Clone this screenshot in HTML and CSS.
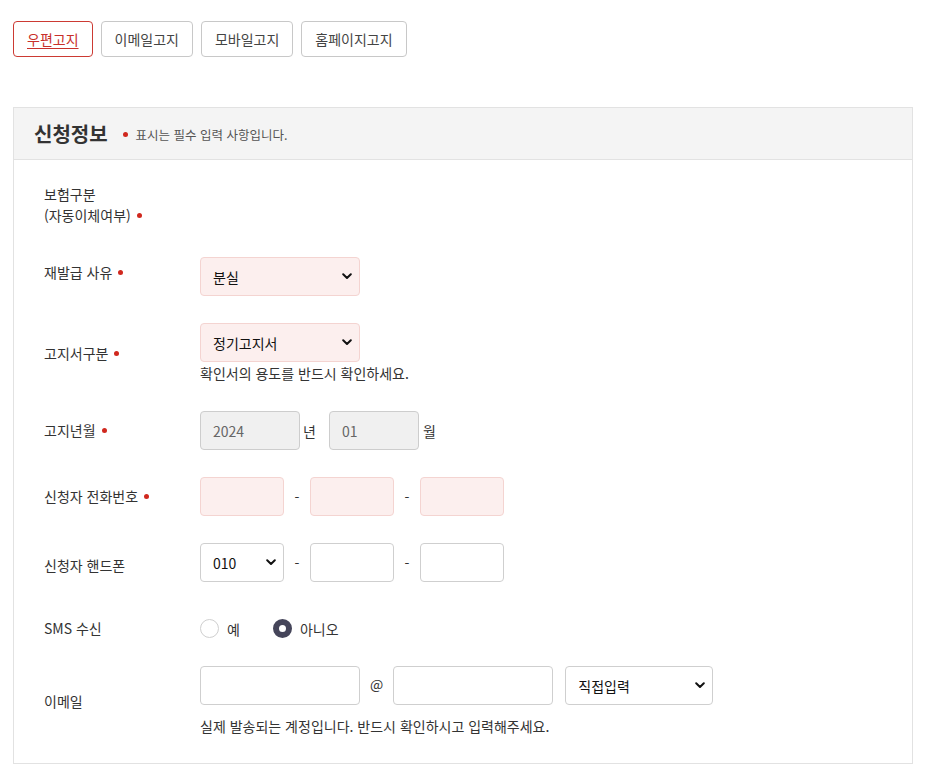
FILE: index.html
```html
<!DOCTYPE html>
<html lang="ko">
<head>
<meta charset="utf-8">
<title>신청정보</title>
<link rel="stylesheet" href="styles.css">
</head>
<body>
<div class="page">
  <nav class="tabs">
    <a class="tab tab-active" href="#">우편고지</a>
    <a class="tab" href="#">이메일고지</a>
    <a class="tab" href="#">모바일고지</a>
    <a class="tab" href="#">홈페이지고지</a>
  </nav>

  <section class="panel">
    <header class="panel-head">
      <h2 class="panel-title">신청정보</h2>
      <p class="panel-note"><span class="req"></span>표시는 필수 입력 사항입니다.</p>
    </header>

    <div class="form">
      <div class="label label-multi">보험구분<br>(자동이체여부)<span class="req"></span></div>
      <div class="control control-empty"></div>

      <div class="label label-shift-up">재발급 사유<span class="req"></span></div>
      <div class="control">
        <span class="select-wrap">
          <select class="field field-req w160"><option>분실</option></select>
          <svg class="chev" width="10" height="7" viewBox="0 0 10 7"><path d="M1.2 1.3 L5 5 L8.8 1.3" fill="none" stroke="#111" stroke-width="2" stroke-linecap="round" stroke-linejoin="round"/></svg>
        </span>
      </div>

      <div class="label">고지서구분<span class="req"></span></div>
      <div class="control control-col">
        <span class="select-wrap">
          <select class="field field-req w160"><option>정기고지서</option></select>
          <svg class="chev" width="10" height="7" viewBox="0 0 10 7"><path d="M1.2 1.3 L5 5 L8.8 1.3" fill="none" stroke="#111" stroke-width="2" stroke-linecap="round" stroke-linejoin="round"/></svg>
        </span>
        <p class="help">확인서의 용도를 반드시 확인하세요.</p>
      </div>

      <div class="label">고지년월<span class="req"></span></div>
      <div class="control">
        <input class="field field-ro w100" type="text" value="2024" readonly>
        <span class="unit unit-year">년</span>
        <input class="field field-ro w90" type="text" value="01" readonly>
        <span class="unit unit-month">월</span>
      </div>

      <div class="label">신청자 전화번호<span class="req"></span></div>
      <div class="control">
        <input class="field field-req w84" type="text">
        <span class="dash">-</span>
        <input class="field field-req w84" type="text">
        <span class="dash">-</span>
        <input class="field field-req w84" type="text">
      </div>

      <div class="label label-shift-down">신청자 핸드폰</div>
      <div class="control">
        <span class="select-wrap">
          <select class="field w84"><option>010</option></select>
          <svg class="chev" width="10" height="7" viewBox="0 0 10 7"><path d="M1.2 1.3 L5 5 L8.8 1.3" fill="none" stroke="#111" stroke-width="2" stroke-linecap="round" stroke-linejoin="round"/></svg>
        </span>
        <span class="dash">-</span>
        <input class="field w84" type="text">
        <span class="dash">-</span>
        <input class="field w84" type="text">
      </div>

      <div class="label label-end">SMS 수신</div>
      <div class="control control-radio">
        <label class="radio"><span class="radio-dot"></span>예</label>
        <label class="radio"><span class="radio-dot radio-on"></span>아니오</label>
      </div>

      <div class="label">이메일</div>
      <div class="control control-col">
        <div class="email-row">
          <input class="field w160" type="text">
          <span class="at">@</span>
          <input class="field w160" type="text">
          <span class="select-wrap email-select">
            <select class="field w148"><option>직접입력</option></select>
            <svg class="chev" width="10" height="7" viewBox="0 0 10 7"><path d="M1.2 1.3 L5 5 L8.8 1.3" fill="none" stroke="#111" stroke-width="2" stroke-linecap="round" stroke-linejoin="round"/></svg>
          </span>
        </div>
        <p class="help help-gap">실제 발송되는 계정입니다. 반드시 확인하시고 입력해주세요.</p>
      </div>
    </div>
  </section>
</div>
</body>
</html>
```

FILE: styles.css
```css
* { box-sizing: border-box; }

html, body {
  margin: 0;
  padding: 0;
  background: #fff;
}

body {
  font-family: "Noto Sans CJK KR", "Noto Sans", sans-serif;
  font-size: 14px;
  color: #333;
}

.page {
  padding: 21px 12px 0 13px;
}

.tabs {
  display: flex;
  gap: 8px;
}

.tab {
  display: flex;
  align-items: center;
  height: 36px;
  padding: 0 13px;
  border: 1px solid #c8c8c8;
  border-radius: 4px;
  color: #444;
  text-decoration: none;
  font-size: 14px;
  line-height: 20px;
}

.tab-active {
  border-color: #cc3a33;
  color: #c8302a;
  text-decoration: underline;
  text-underline-offset: 3px;
}

.panel {
  margin-top: 50px;
  border: 1px solid #e2e2e2;
}

.panel-head {
  display: flex;
  align-items: center;
  height: 52px;
  padding: 0 20px;
  background: #f4f4f4;
  border-bottom: 1px solid #e2e2e2;
}

.panel-title {
  margin: 0;
  font-size: 20px;
  font-weight: 700;
  color: #333;
  line-height: 28px;
}

.panel-note {
  display: flex;
  align-items: center;
  margin: 2px 0 0 15px;
  font-size: 12.5px;
  color: #555;
}

.panel-note .req {
  margin: 0 8px 0 0;
}

.req {
  display: inline-block;
  width: 5px;
  height: 5px;
  border-radius: 50%;
  background: #d0281e;
  margin-left: 6px;
  vertical-align: 3px;
}

.form {
  display: grid;
  grid-template-columns: 156px 1fr;
  row-gap: 27px;
  padding: 24px 30px 26px 30px;
}

.label {
  align-self: center;
  line-height: 21px;
  color: #333;
}

.label-multi {
  margin-bottom: 4px;
}

.label-shift-up {
  position: relative;
  top: -4px;
}

.label-shift-down {
  position: relative;
  top: 3px;
}

.label-end {
  align-self: end;
}

.control {
  display: flex;
  align-items: center;
}

.control-col {
  flex-direction: column;
  align-items: flex-start;
}

.control-radio {
  height: 21px;
  margin-top: 9px;
}

.field {
  height: 39px;
  border: 1px solid #cfcfcf;
  border-radius: 4px;
  background: #fff;
  font-family: inherit;
  font-size: 14px;
  color: #222;
  padding: 0 12px;
  margin: 0;
}

select.field {
  appearance: none;
  -webkit-appearance: none;
  color: #111;
  padding: 0 28px 0 12px;
}

.select-wrap {
  position: relative;
  display: flex;
}

.chev {
  position: absolute;
  right: 8px;
  top: 16px;
  pointer-events: none;
}

.field-req {
  background: #fcefee;
  border-color: #f4d4d1;
}

.field-ro {
  background: #f0f0f0;
  border-color: #cdcdcd;
  color: #666;
}

.w160 { width: 160px; }
.w148 { width: 148px; }
.w100 { width: 100px; }
.w90 { width: 90px; }
.w84 { width: 84px; }

.help {
  margin: 0;
  line-height: 22px;
  color: #333;
}

.help-gap {
  margin-top: 10px;
}

.unit {
  color: #333;
}

.unit-year {
  margin: 0 13px 0 3px;
}

.unit-month {
  margin-left: 4px;
}

.dash {
  width: 26px;
  text-align: center;
  color: #333;
}

.email-row {
  display: flex;
  align-items: flex-start;
}

.at {
  margin: 8px 10px 0 10px;
  line-height: 21px;
}

.email-select {
  margin-left: 12px;
}

.radio {
  display: flex;
  align-items: center;
  color: #333;
  margin-right: 33px;
}

.radio-dot {
  width: 19px;
  height: 19px;
  border-radius: 50%;
  border: 1px solid #cfcfcf;
  background: #fff;
  margin: 0 8px 0 0;
}

.radio-on {
  border: 6px solid #45455a;
  background: #fff;
}
```
